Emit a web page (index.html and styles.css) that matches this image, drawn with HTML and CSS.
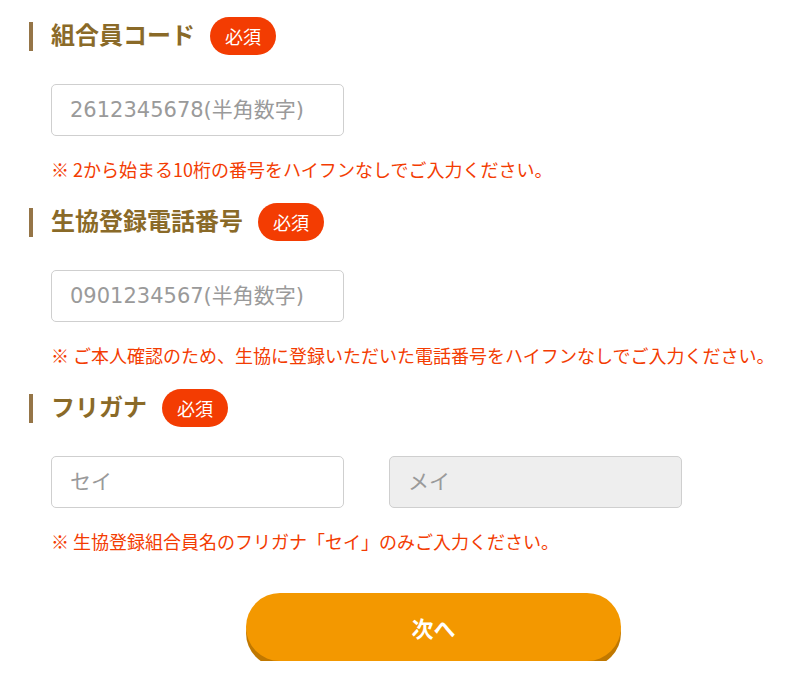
FILE: index.html
```html
<!DOCTYPE html>
<html lang="ja">
  <head>
    <meta charset="utf-8">
    <title>会員情報の確認</title>
    <link rel="stylesheet" href="styles.css">
  </head>
  <body>
    <form class="entry">
      <div class="field">
        <h2 class="label"><span class="title">組合員コード</span><span class="required">必須</span></h2>
        <div class="inputs">
          <input class="text" type="text" placeholder="2612345678(半角数字)">
        </div>
        <p class="note">※ 2から始まる10桁の番号をハイフンなしでご入力ください。</p>
      </div>

      <div class="field">
        <h2 class="label"><span class="title">生協登録電話番号</span><span class="required">必須</span></h2>
        <div class="inputs">
          <input class="text" type="text" placeholder="0901234567(半角数字)">
        </div>
        <p class="note">※ ご本人確認のため、生協に登録いただいた電話番号をハイフンなしでご入力ください。</p>
      </div>

      <div class="field">
        <h2 class="label"><span class="title">フリガナ</span><span class="required">必須</span></h2>
        <div class="inputs">
          <input class="text" type="text" placeholder="セイ">
          <input class="text disabled" type="text" placeholder="メイ" disabled>
        </div>
        <p class="note">※ 生協登録組合員名のフリガナ「セイ」のみご入力ください。</p>
      </div>

      <div class="actions">
        <button class="next" type="button">次へ</button>
      </div>
    </form>
  </body>
</html>
```

FILE: styles.css
```css
body {
  margin: 0;
  font-family: "Noto Sans CJK JP", "Noto Sans", sans-serif;
  background: #fff;
}
.entry {
  padding: 16px 0 0 29px;
}
.field {
  margin-bottom: 21px;
}
.label {
  display: flex;
  align-items: center;
  height: 40px;
  margin: 0;
  font-size: 24px;
  font-weight: bold;
  color: #8a6a28;
  line-height: 28px;
}
/* short brown bar in front of the title */
.label::before {
  content: "";
  width: 4px;
  height: 29px;
  margin-right: 18px;
  background: #957547;
}
.title {
  margin-bottom: 4px;
}
.required {
  display: inline-flex;
  align-items: center;
  justify-content: center;
  height: 38px;
  margin-left: 15px;
  padding: 0 15px;
  border-radius: 19px;
  background: #f33c02;
  color: #fff;
  font-size: 18px;
  font-weight: normal;
}
.inputs {
  display: flex;
  gap: 45px;
  margin: 28px 0 0 22px;
}
.text {
  width: 293px;
  height: 52px;
  box-sizing: border-box;
  padding: 0 18px;
  border: 1px solid #cfcfcf;
  border-radius: 5px;
  background: #fff;
  font-family: "DejaVu Sans", "Noto Sans CJK JP", sans-serif;
  font-size: 21px;
  color: #333;
}
.text::placeholder {
  color: #9a9a9a;
}
.disabled {
  background: #eee;
}
.note {
  margin: 21px 0 0 22px;
  font-size: 18px;
  line-height: 24px;
  color: #f33c02;
}
.actions {
  margin-top: 40px;
  padding-left: 217px;
}
.next {
  display: block;
  width: 375px;
  height: 68px;
  border: none;
  border-radius: 34px;
  background: #f39800;
  box-shadow: 0 6px 0 #c07800;
  color: #fff;
  font-family: inherit;
  font-size: 22px;
  font-weight: bold;
}
```
